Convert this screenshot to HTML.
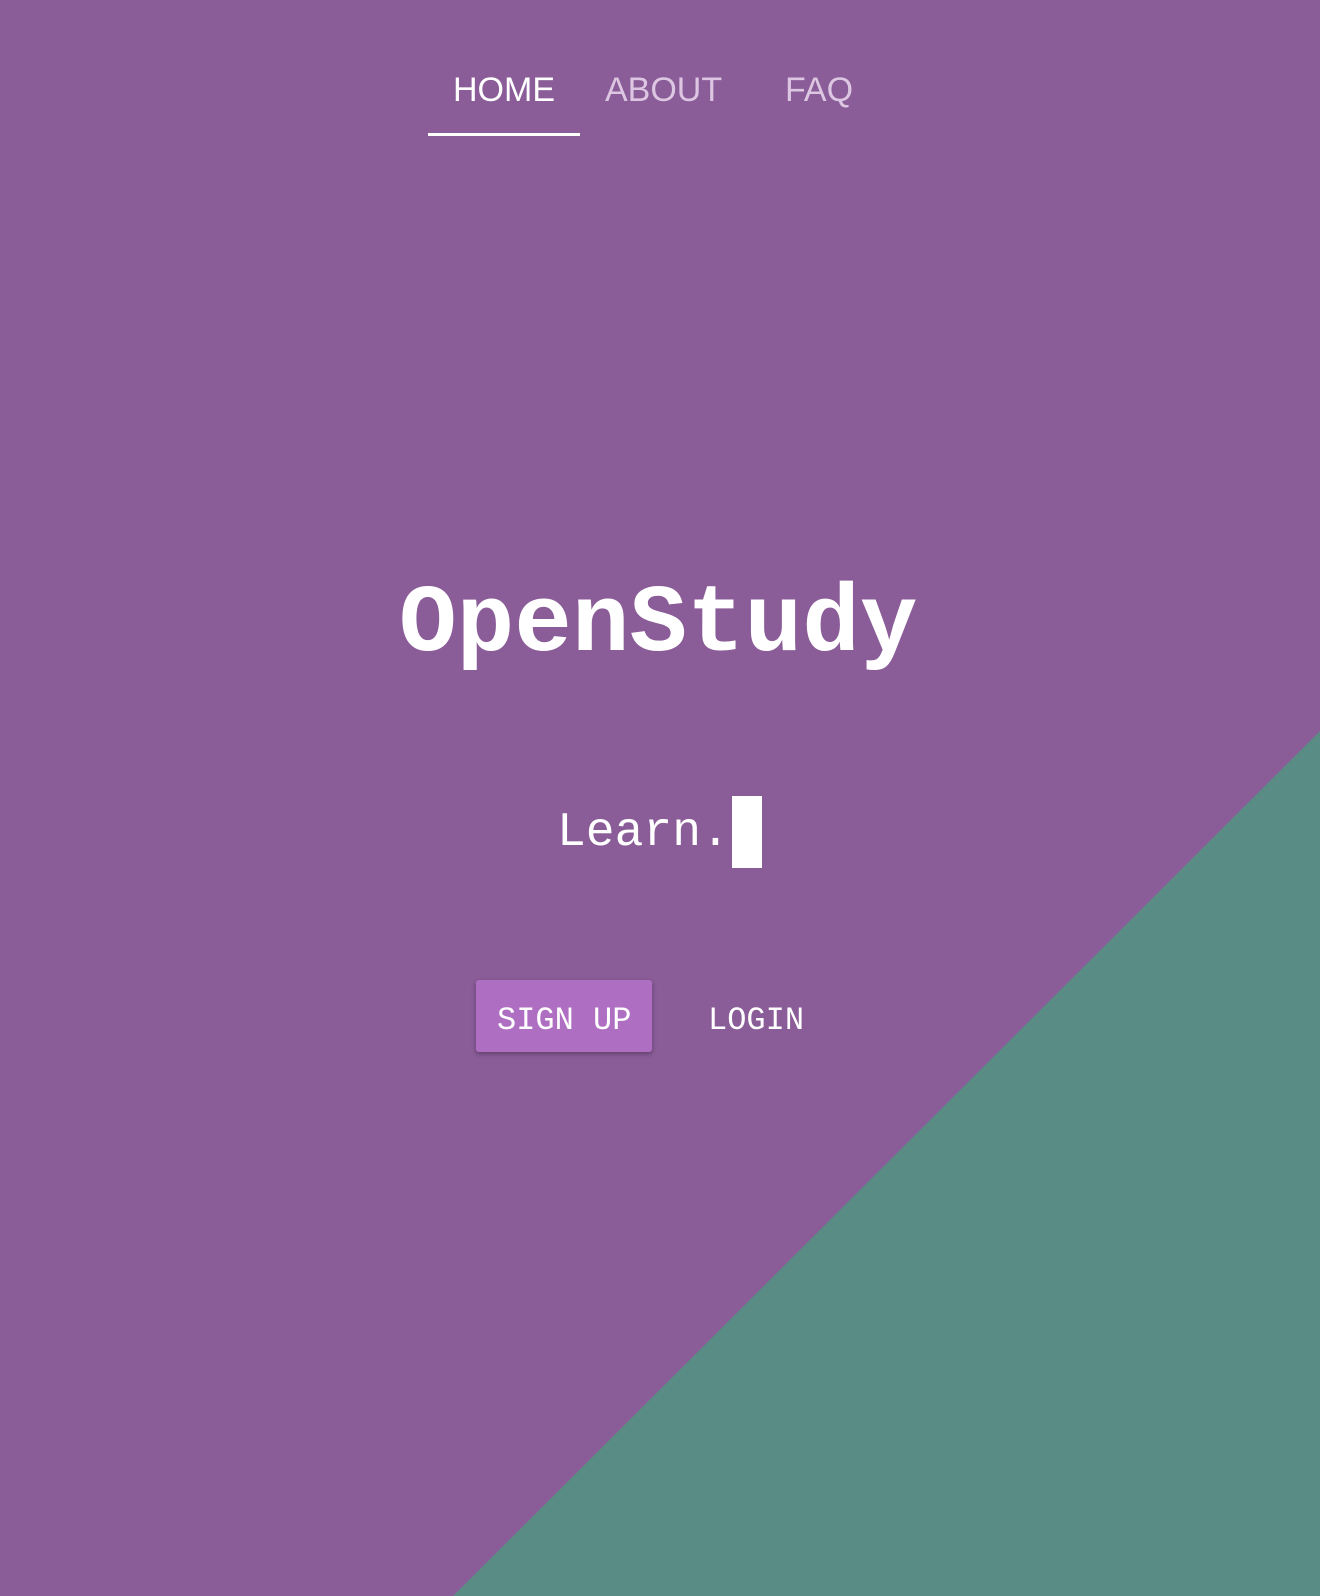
<!DOCTYPE html>
<html><head><meta charset="utf-8"><style>
html,body{margin:0;padding:0;width:1320px;height:1596px;overflow:hidden;background:#8a5c98;position:relative;font-family:"Liberation Mono",monospace;color:#fff}
.tri{position:absolute;left:0;top:0}
.nav{position:absolute;font-family:"Liberation Sans",sans-serif;font-size:34px;top:70px;line-height:40px}
.ul{position:absolute;left:428px;top:133px;width:152px;height:3px;background:#fff}
.t{position:absolute;white-space:nowrap}
</style></head><body>
<svg class="tri" width="1320" height="1596"><polygon points="1320,731 1320,1596 453,1596" fill="#588c85"/></svg>
<div class="nav" style="left:453px">HOME</div>
<div class="nav" style="left:605px;color:#dcc6e2">ABOUT</div>
<div class="nav" style="left:785px;color:#dcc6e2">FAQ</div>
<div class="ul"></div>
<div class="t" style="left:399px;top:570px;font-size:96px;font-weight:bold;line-height:110px">OpenStudy</div>
<div class="t" style="left:557px;top:803px;font-size:48px;line-height:60px">Learn.</div>
<div style="position:absolute;left:732px;top:796px;width:30px;height:72px;background:#fff"></div>
<div style="position:absolute;left:476px;top:980px;width:176px;height:72px;background:#ae6fc2;border-radius:3px;box-shadow:0 2px 5px rgba(0,0,0,.3)"></div>
<div class="t" style="left:497px;top:1001px;font-size:32px;line-height:40px">SIGN UP</div>
<div class="t" style="left:708px;top:1001px;font-size:32px;line-height:40px">LOGIN</div>
</body></html>
